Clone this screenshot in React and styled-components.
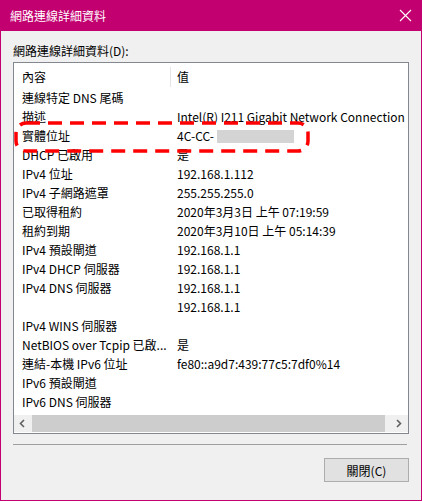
import React from "react";
import styled, { createGlobalStyle } from "styled-components";

const Global = createGlobalStyle`
  html, body {
    margin: 0;
    padding: 0;
    background: #f0f0f0;
  }
  body {
    font-family: "Noto Sans CJK TC", "Noto Sans", sans-serif;
    font-size: 12px;
    color: #000;
  }
`;

const rows = [
  ["連線特定 DNS 尾碼", ""],
  ["描述", "Intel(R) I211 Gigabit Network Connection"],
  ["實體位址", "4C-CC-"],
  ["DHCP 已啟用", "是"],
  ["IPv4 位址", "192.168.1.112"],
  ["IPv4 子網路遮罩", "255.255.255.0"],
  ["已取得租約", "2020年3月3日 上午 07:19:59"],
  ["租約到期", "2020年3月10日 上午 05:14:39"],
  ["IPv4 預設閘道", "192.168.1.1"],
  ["IPv4 DHCP 伺服器", "192.168.1.1"],
  ["IPv4 DNS 伺服器", "192.168.1.1"],
  ["", "192.168.1.1"],
  ["IPv4 WINS 伺服器", ""],
  ["NetBIOS over Tcpip 已啟...", "是"],
  ["連結-本機 IPv6 位址", "fe80::a9d7:439:77c5:7df0%14"],
  ["IPv6 預設閘道", ""],
  ["IPv6 DNS 伺服器", ""],
];

function Chevron({ dir }) {
  const pts = dir === "left" ? "5,1 1.5,4.5 5,8" : "1,1 4.5,4.5 1,8";
  return (
    <svg width="7" height="9" viewBox="0 0 7 9">
      <polyline points={pts} fill="none" stroke="#606060" strokeWidth="1.6" />
    </svg>
  );
}

export default function App() {
  return (
    <>
      <Global />
      <Window>
        <TitleBar>
          <span>網路連線詳細資料</span>
          <svg width="13" height="13" viewBox="0 0 13 13">
            <path d="M1 1 L12 12 M12 1 L1 12" stroke="#fff" strokeWidth="1.1" />
          </svg>
        </TitleBar>
        <Body>
          <Label>網路連線詳細資料(D):</Label>
          <ListBox>
            <Header>
              <HeadCell>內容</HeadCell>
              <HeadCell divider>值</HeadCell>
            </Header>
            <Rows>
              {rows.map(([k, v], i) => (
                <Row key={i}>
                  <Cell>{k}</Cell>
                  <Cell>{v}</Cell>
                </Row>
              ))}
            </Rows>
            <ScrollBar>
              <Arrow>
                <Chevron dir="left" />
              </Arrow>
              <Track>
                <Thumb />
              </Track>
              <Arrow>
                <Chevron dir="right" />
              </Arrow>
            </ScrollBar>
          </ListBox>
          <Separator />
          <Footer>
            <Button>關閉(C)</Button>
          </Footer>
          <Blur />
          <Highlight width="296" height="32" viewBox="0 0 296 32">
            <rect
              x="2"
              y="2"
              width="292"
              height="28"
              rx="10"
              fill="none"
              stroke="#ff0000"
              strokeWidth="3.5"
              strokeDasharray="14 8"
            />
          </Highlight>
        </Body>
      </Window>
    </>
  );
}

const Window = styled.div`
  width: 422px;
  height: 501px;
  box-sizing: border-box;
  border: 1px solid #c2006f;
  border-top: none;
  display: flex;
  flex-direction: column;
  background: #f0f0f0;
`;

const TitleBar = styled.div`
  height: 31px;
  margin: 0 -1px;
  background: #c2006f;
  color: #fff;
  display: flex;
  align-items: center;
  justify-content: space-between;
  padding: 0 10px 0 10px;
  font-size: 12px;
  svg {
    margin-right: 0px;
  }
`;

const Body = styled.div`
  position: relative;
  flex: 1;
  padding: 11px 12px 0 12px;
  display: flex;
  flex-direction: column;
`;

const Label = styled.div`
  height: 18px;
  line-height: 18px;
  margin-bottom: 2px;
`;

const ListBox = styled.div`
  width: 396px;
  height: 372px;
  box-sizing: border-box;
  border: 1px solid #828790;
  background: #fff;
  display: flex;
  flex-direction: column;
  overflow: hidden;
`;

const Header = styled.div`
  height: 25px;
  display: grid;
  grid-template-columns: 156px 1fr;
  align-items: center;
  flex-shrink: 0;
`;

const HeadCell = styled.div`
  height: 20px;
  line-height: 20px;
  padding-left: ${(p) => (p.divider ? "6px" : "8px")};
  border-left: ${(p) => (p.divider ? "1px solid #e5e5e5" : "none")};
  margin-top: 2px;
`;

const Rows = styled.div`
  flex: 1;
  overflow: hidden;
`;

const Row = styled.div`
  height: 19px;
  display: grid;
  grid-template-columns: 155px 1fr;
  align-items: center;
`;

const Cell = styled.div`
  padding-left: 8px;
  white-space: nowrap;
  line-height: 19px;
`;

const ScrollBar = styled.div`
  height: 17px;
  display: flex;
  background: #f0f0f0;
  margin-bottom: 1px;
  flex-shrink: 0;
`;

const Arrow = styled.div`
  width: 17px;
  display: flex;
  align-items: center;
  justify-content: center;
`;

const Track = styled.div`
  flex: 1;
  padding: 0 6px 0 1px;
  display: flex;
`;

const Thumb = styled.div`
  flex: 1;
  background: #cdcdcd;
`;

const Separator = styled.div`
  width: 394px;
  height: 1px;
  background: #a0a0a0;
  margin-top: 10px;
`;

const Footer = styled.div`
  display: flex;
  justify-content: flex-end;
  margin-top: 13px;
`;

const Button = styled.div`
  width: 85px;
  height: 24px;
  box-sizing: border-box;
  border: 1px solid #adadad;
  background: #e1e1e1;
  display: flex;
  align-items: center;
  justify-content: center;
`;

const Blur = styled.div`
  position: absolute;
  left: 216px;
  top: 99px;
  width: 77px;
  height: 13px;
  background: #d4d4d4;
`;

const Highlight = styled.svg`
  position: absolute;
  left: 13px;
  top: 90px;
`;
